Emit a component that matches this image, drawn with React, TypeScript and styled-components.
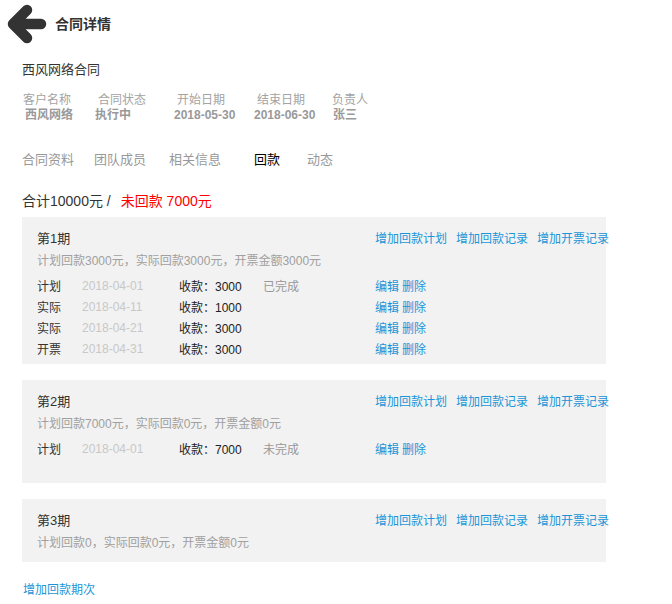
import styled, { createGlobalStyle } from "styled-components";

const GlobalStyle = createGlobalStyle`
  body {
    margin: 0;
    background: #fff;
    font-family: "Liberation Sans", "Noto Sans CJK SC", sans-serif;
    color: #333;
  }
`;

const Page = styled.div`
  width: 672px;
  padding: 0 0 10px 22px;
  box-sizing: border-box;
`;

const Header = styled.div`
  display: flex;
  align-items: center;
  height: 48px;
  margin-left: -22px;
`;

const Title = styled.h1`
  margin: 0 0 0 5px;
  font-size: 14px;
  font-weight: bold;
  color: #333;
  line-height: 20px;
`;

const ContractName = styled.div`
  margin-top: 12px;
  font-size: 13px;
  line-height: 20px;
  color: #333;
`;

const InfoRow = styled.div`
  display: flex;
  margin-top: 13px;
  padding-left: 1px;
`;

const InfoItem = styled.div<{ $width?: number }>`
  width: ${(p) => (p.$width ? `${p.$width}px` : "auto")};
  flex-shrink: 0;
  display: flex;
  flex-direction: column;
  font-size: 12px;
  line-height: 15px;
`;

const InfoLabel = styled.span`
  color: #a3a3a3;
`;

const InfoValue = styled.span<{ $shift: number }>`
  margin-left: ${(p) => p.$shift}px;
  color: #999;
  font-weight: bold;
`;

const Tabs = styled.div`
  display: flex;
  margin-top: 27px;
`;

const Tab = styled.span<{ $width?: number; $active?: boolean }>`
  width: ${(p) => (p.$width ? `${p.$width}px` : "auto")};
  flex-shrink: 0;
  font-size: 13px;
  line-height: 20px;
  color: ${(p) => (p.$active ? "#000" : "#999")};
`;

const Total = styled.div`
  margin-top: 21px;
  font-size: 14px;
  line-height: 20px;
  color: #333;
`;

const Unpaid = styled.span`
  margin-left: 10px;
  color: #f00;
`;

const Periods = styled.div`
  margin-top: 6px;
  display: flex;
  flex-direction: column;
  gap: 16px;
`;

const Card = styled.section<{ $tail?: number }>`
  width: 584px;
  box-sizing: border-box;
  background: #f2f2f2;
  padding: 11px 0 ${(p) => 3 + (p.$tail ?? 0)}px 15px;
  white-space: nowrap;
`;

const CardHead = styled.div`
  display: grid;
  grid-template-columns: 338px auto;
  line-height: 22px;
`;

const PeriodName = styled.span`
  font-size: 13px;
  color: #333;
`;

const Actions = styled.div`
  display: flex;
  gap: 9px;
`;

const Link = styled.a`
  font-size: 12px;
  color: #1b95d7;
  cursor: pointer;
  text-decoration: none;
`;

const Summary = styled.div`
  font-size: 12px;
  line-height: 22px;
  color: #a0a0a0;
`;

const Records = styled.div`
  margin-top: 5px;
`;

const Record = styled.div`
  display: grid;
  grid-template-columns: 45px 97px 84px 112px auto;
  height: 21px;
  line-height: 21px;
  font-size: 12px;
`;

const Kind = styled.span`
  color: #333;
`;

const RecDate = styled.span`
  color: #c8c8c8;
  line-height: 19px;
`;

const Amount = styled.span`
  color: #222;
`;

const State = styled.span`
  color: #999;
`;

const RowLinks = styled.div`
  display: flex;
  gap: 3px;
`;

const AddPeriod = styled(Link)`
  display: block;
  margin: 18px 0 0 1px;
  line-height: 20px;
`;

const BackArrow = () => (
  <svg width="50" height="48" viewBox="0 0 50 48">
    <path
      d="M41 24 H14 M27 10 L13 24 L27 38"
      fill="none"
      stroke="#333"
      strokeWidth="10.5"
      strokeLinecap="round"
      strokeLinejoin="round"
    />
  </svg>
);

const info = [
  { label: "客户名称", value: "西风网络", width: 75, shift: 2 },
  { label: "合同状态", value: "执行中", width: 79, shift: -3 },
  { label: "开始日期", value: "2018-05-30", width: 80, shift: -3 },
  { label: "结束日期", value: "2018-06-30", width: 75, shift: -3 },
  { label: "负责人", value: "张三", width: 0, shift: 1 },
];

const tabs = [
  { name: "合同资料", width: 72 },
  { name: "团队成员", width: 75 },
  { name: "相关信息", width: 85 },
  { name: "回款", width: 53, active: true },
  { name: "动态", width: 0 },
];

type Rec = { kind: string; date: string; amount: string; state?: string };

const periods: { name: string; summary: string; records: Rec[]; tail?: number }[] = [
  {
    name: "第1期",
    summary: "计划回款3000元，实际回款3000元，开票金额3000元",
    records: [
      { kind: "计划", date: "2018-04-01", amount: "3000", state: "已完成" },
      { kind: "实际", date: "2018-04-11", amount: "1000" },
      { kind: "实际", date: "2018-04-21", amount: "3000" },
      { kind: "开票", date: "2018-04-31", amount: "3000" },
    ],
  },
  {
    name: "第2期",
    summary: "计划回款7000元，实际回款0元，开票金额0元",
    records: [{ kind: "计划", date: "2018-04-01", amount: "7000", state: "未完成" }],
    tail: 19,
  },
  {
    name: "第3期",
    summary: "计划回款0，实际回款0元，开票金额0元",
    records: [],
  },
];

export default function App() {
  return (
    <>
      <GlobalStyle />
      <Page>
        <Header>
          <BackArrow />
          <Title>合同详情</Title>
        </Header>
        <ContractName>西风网络合同</ContractName>
        <InfoRow>
          {info.map((i) => (
            <InfoItem key={i.label} $width={i.width}>
              <InfoLabel>{i.label}</InfoLabel>
              <InfoValue $shift={i.shift}>{i.value}</InfoValue>
            </InfoItem>
          ))}
        </InfoRow>
        <Tabs>
          {tabs.map((t) => (
            <Tab key={t.name} $width={t.width} $active={t.active}>
              {t.name}
            </Tab>
          ))}
        </Tabs>
        <Total>
          合计10000元 /<Unpaid>未回款 7000元</Unpaid>
        </Total>
        <Periods>
          {periods.map((p) => (
            <Card key={p.name} $tail={p.tail}>
              <CardHead>
                <PeriodName>{p.name}</PeriodName>
                <Actions>
                  <Link>增加回款计划</Link>
                  <Link>增加回款记录</Link>
                  <Link>增加开票记录</Link>
                </Actions>
              </CardHead>
              <Summary>{p.summary}</Summary>
              <Records>
                {p.records.map((r, idx) => (
                  <Record key={idx}>
                    <Kind>{r.kind}</Kind>
                    <RecDate>{r.date}</RecDate>
                    <Amount>收款：{r.amount}</Amount>
                    <State>{r.state ?? ""}</State>
                    <RowLinks>
                      <Link>编辑</Link>
                      <Link>删除</Link>
                    </RowLinks>
                  </Record>
                ))}
              </Records>
            </Card>
          ))}
        </Periods>
        <AddPeriod>增加回款期次</AddPeriod>
      </Page>
    </>
  );
}
